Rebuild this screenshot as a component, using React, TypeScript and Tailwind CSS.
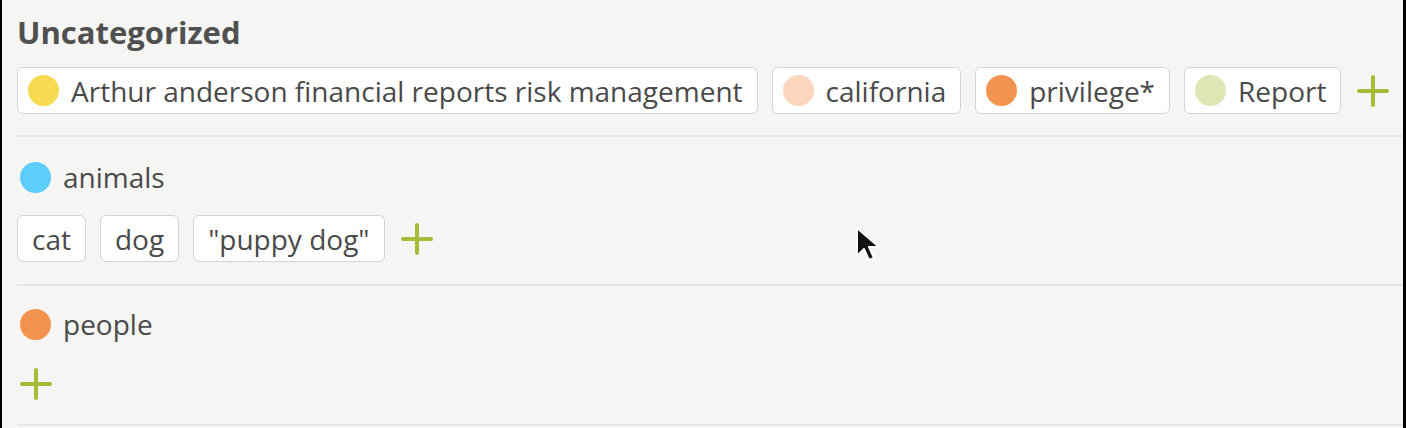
import React from "react";

const FONT = { fontFamily: '"Open Sans", "Noto Sans", sans-serif' };

function Plus() {
  return (
    <svg width="32" height="32" viewBox="0 0 32 32" className="shrink-0">
      <path d="M16 2v28M2 16h28" stroke="#a3bd3b" strokeWidth="4" strokeLinecap="round" />
    </svg>
  );
}

function Dot({ color }: { color: string }) {
  return <span className="inline-block h-[31px] w-[31px] shrink-0 rounded-full" style={{ backgroundColor: color }} />;
}

function Chip({ label, color }: { label: string; color?: string }) {
  return (
    <div
      className={`flex h-[47px] items-center gap-3 rounded-[6px] border-[1.5px] border-[#d4d4d2] bg-white pr-[14px] ${
        color ? "pl-[10px]" : "pl-[14px]"
      }`}
    >
      {color && <Dot color={color} />}
      <span className="text-[28px] leading-none text-[#4a4a4a]">{label}</span>
    </div>
  );
}

function Cursor() {
  return (
    <svg className="absolute left-[852px] top-[225px]" width="26" height="40" viewBox="0 0 26 40">
      <path d="M3 3v28l7-7 5 11 5-2-5-11h10z" fill="#111" stroke="#fff" strokeWidth="2" strokeLinejoin="round" />
    </svg>
  );
}

export default function App() {
  return (
    <div
      className="relative h-[428px] w-[1406px] overflow-hidden border-l-2 border-r-[3px] border-black bg-[#f5f5f4]"
      style={FONT}
    >
      <section className="pl-[15px] pt-[14px]">
        <h1 className="h-9 text-[31px] font-bold leading-9 text-[#505050]">Uncategorized</h1>
        <div className="mt-[17px] flex items-center gap-[14px]">
          <Chip label="Arthur anderson financial reports risk management" color="#f6da4f" />
          <Chip label="california" color="#fbd5bd" />
          <Chip label="privilege*" color="#f29350" />
          <Chip label="Report" color="#dde6b5" />
          <div className="ml-[2px]">
            <Plus />
          </div>
        </div>
        <div className="mt-[21px] h-[2px] bg-[#e6e6e4]" />
      </section>

      <section className="pl-[15px] pt-[24px]">
        <div className="flex h-8 items-center gap-3 pl-[3px]">
          <Dot color="#5ccdfd" />
          <span className="text-[28px] leading-none text-[#4a4a4a]">animals</span>
        </div>
        <div className="mt-[22px] flex items-center gap-[14px]">
          <Chip label="cat" />
          <Chip label="dog" />
          <Chip label={'"puppy dog"'} />
          <div className="ml-[2px]">
            <Plus />
          </div>
        </div>
        <div className="mt-[22px] h-[2px] bg-[#e6e6e4]" />
      </section>

      <section className="pl-[15px] pt-[22px]">
        <div className="flex h-8 items-center gap-3 pl-[3px]">
          <Dot color="#f29350" />
          <span className="text-[28px] leading-none text-[#4a4a4a]">people</span>
        </div>
        <div className="mt-[28px] pl-[3px]">
          <Plus />
        </div>
        <div className="mt-[24px] h-[2px] bg-[#e6e6e4]" />
      </section>

      <Cursor />
    </div>
  );
}
